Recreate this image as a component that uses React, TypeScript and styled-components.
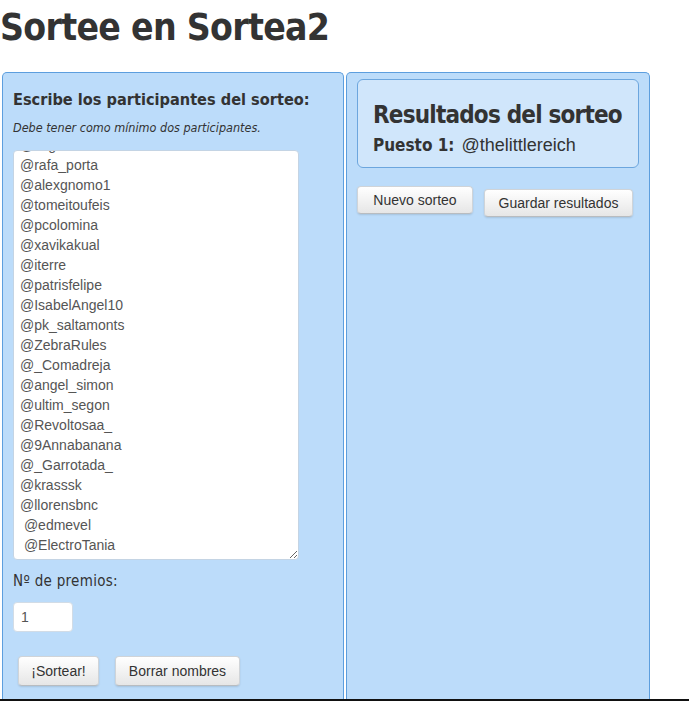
import React, {useEffect, useRef} from "react";
import styled, {createGlobalStyle} from "styled-components";

const participants = [
    "@ArgentorOTG",
    "@rafa_porta",
    "@alexgnomo1",
    "@tomeitoufeis",
    "@pcolomina",
    "@xavikakual",
    "@iterre",
    "@patrisfelipe",
    "@IsabelAngel10",
    "@pk_saltamonts",
    "@ZebraRules",
    "@_Comadreja",
    "@angel_simon",
    "@ultim_segon",
    "@Revoltosaa_",
    "@9Annabanana",
    "@_Garrotada_",
    "@krasssk",
    "@llorensbnc",
    " @edmevel",
    " @ElectroTania",
];

export default function App() {
    const listRef = useRef<HTMLTextAreaElement>(null);

    useEffect(() => {
        // la lista se ve desplazada hasta el final
        if (listRef.current) listRef.current.scrollTop = listRef.current.scrollHeight;
    }, []);

    return (
        <Page>
            <GlobalStyle/>
            <Title>Sortee en Sortea2</Title>
            <Columns>
                <Panel $width={342} $top={0}>
                    <Heading>Escribe los participantes del sorteo:</Heading>
                    <Hint>Debe tener como mínimo dos participantes.</Hint>
                    <NameList ref={listRef} defaultValue={participants.join("\n")}/>
                    <Label>Nº de premios:</Label>
                    <PrizeInput defaultValue={"1"}/>
                    <Actions>
                        <Button $w={81} $h={30}>¡Sortear!</Button>
                        <Button $w={125} $h={30}>Borrar nombres</Button>
                    </Actions>
                </Panel>
                <Panel $width={304} $top={6}>
                    <ResultBox>
                        <ResultTitle>Resultados del sorteo</ResultTitle>
                        <Winner><b>Puesto 1:</b><span>@thelittlereich</span></Winner>
                    </ResultBox>
                    <ResultActions>
                        <Button $w={116} $h={28}>Nuevo sorteo</Button>
                        <Button $w={149} $h={28} className={"low"}>Guardar resultados</Button>
                    </ResultActions>
                </Panel>
            </Columns>
        </Page>
    )
}

const narrow = `
    font-family: "DejaVu Sans Condensed", "DejaVu Sans", Verdana, sans-serif;
    font-stretch: condensed;
`

const GlobalStyle = createGlobalStyle`
    html, body {
        margin: 0;
        padding: 0;
        background: #fff;
        overflow: hidden;
    }
    body {
        font-family: "DejaVu Sans", Verdana, sans-serif;
        color: #333;
    }
`

const Page = styled.div`
    width: 689px;
    height: 701px;
    display: flex;
    flex-direction: column;
    border-bottom: 2px solid #111;
    box-sizing: border-box;
`

const Title = styled.h1`
    ${narrow};
    margin: 0;
    height: 72px;
    padding-top: 6px;
    box-sizing: border-box;
    font-size: 37px;
    line-height: 44px;
    font-weight: bold;
    letter-spacing: -0.7px;
    color: #333;
    white-space: nowrap;
`

const Columns = styled.div`
    flex: 1;
    display: flex;
    flex-direction: row;
    gap: 2px;
    padding-left: 2px;
`

const Panel = styled.div<{ $width: number, $top: number }>`
    width: ${props => props.$width}px;
    box-sizing: border-box;
    display: flex;
    flex-direction: column;
    padding: ${props => props.$top}px 10px 0 10px;
    background-color: #bcdcfa;
    border: 1px solid #5c9ede;
    border-bottom: none;
    border-radius: 5px 5px 0 0;
`

const Heading = styled.h2`
    ${narrow};
    margin: 17px 0 0 0;
    font-size: 16.2px;
    line-height: 20px;
    font-weight: bold;
    color: #333;
    white-space: nowrap;
`

const Hint = styled.p`
    ${narrow};
    margin: 11px 0 0 0;
    font-size: 12.5px;
    line-height: 14px;
    font-style: italic;
    color: #333;
    white-space: nowrap;
`

const NameList = styled.textarea`
    margin: 15px 0 0 0;
    width: 286px;
    height: 410px;
    box-sizing: border-box;
    padding: 3px 6px 4px 6px;
    border: 1px solid #c4d4e4;
    border-radius: 4px;
    background: #fff;
    font-family: "Liberation Sans", Arial, sans-serif;
    font-size: 14px;
    line-height: 20px;
    color: #555;
    outline: none;
    overflow: hidden;
    resize: both;
`

const Label = styled.div`
    ${narrow};
    margin-top: 12px;
    font-size: 15px;
    line-height: 18px;
    letter-spacing: 0.3px;
    color: #333;
`

const PrizeInput = styled.input`
    margin-top: 12px;
    width: 60px;
    height: 30px;
    box-sizing: border-box;
    padding: 0 7px;
    border: 1px solid #d2dce6;
    border-radius: 4px;
    background: #fff;
    font-family: "Liberation Sans", Arial, sans-serif;
    font-size: 14px;
    color: #555;
    outline: none;
`

const Actions = styled.div`
    margin-top: 24px;
    padding-left: 5px;
    display: flex;
    flex-direction: row;
    gap: 16px;
`

const Button = styled.button<{ $w: number, $h: number }>`
    width: ${props => props.$w}px;
    height: ${props => props.$h}px;
    padding: 0;
    border: 1px solid #d0d4d8;
    border-bottom-color: #b8bcc0;
    border-radius: 4px;
    background: linear-gradient(#ffffff, #e6e6e6);
    box-shadow: 0 1px 2px rgba(0, 0, 0, 0.12);
    font-family: "Liberation Sans", Arial, sans-serif;
    font-size: 14px;
    color: #333;
    cursor: pointer;

    &.low {
        margin-top: 3px;
    }
`

const ResultBox = styled.div`
    padding: 21px 10px 11px 15px;
    background-color: #d0e6fb;
    border: 1px solid #6ca6de;
    border-radius: 6px;
`

const ResultTitle = styled.h2`
    ${narrow};
    margin: 0;
    font-size: 24px;
    line-height: 28px;
    font-weight: bold;
    letter-spacing: -0.8px;
    color: #333;
    white-space: nowrap;
`

const Winner = styled.div`
    margin-top: 5px;
    display: flex;
    flex-direction: row;
    align-items: baseline;
    gap: 7px;
    line-height: 22px;
    color: #333;

    & > b {
        ${narrow};
        font-weight: bold;
        font-size: 17px;
    }

    & > span {
        font-family: "Liberation Sans", Arial, sans-serif;
        font-size: 18px;
    }
`

const ResultActions = styled.div`
    margin-top: 18px;
    display: flex;
    flex-direction: row;
    align-items: flex-start;
    gap: 11px;
`
